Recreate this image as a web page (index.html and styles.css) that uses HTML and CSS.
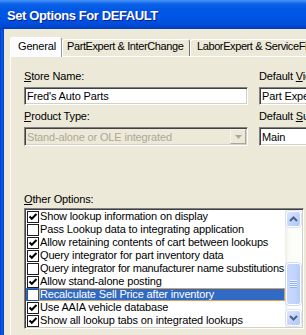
FILE: index.html
```html
<!DOCTYPE html>
<html>
<head>
<meta charset="utf-8">
<link rel="stylesheet" href="styles.css">
</head>
<body>
<div class="window">
  <div class="titlebar">Set Options For DEFAULT</div>
  <div class="frame">
    <div class="frame-left"></div>
    <div class="client">
      <div class="tabs">
        <div class="tab active">General</div>
        <div class="tab tab-part">PartExpert &amp; InterChange</div>
        <div class="tab tab-labor">LaborExpert &amp; ServiceFinder</div>
      </div>
      <div class="panel">
        <div class="fields">
          <div class="col col-left">
            <div class="lbl"><u>S</u>tore Name:</div>
            <div class="input">Fred's Auto Parts</div>
            <div class="lbl lbl-next"><u>P</u>roduct Type:</div>
            <div class="combo">
              <span class="combo-text">Stand-alone or OLE integrated</span>
              <span class="drop"><svg width="7" height="4" viewBox="0 0 7 4"><path d="M0 0H7L3.5 4Z" fill="#ACA899"/></svg></span>
            </div>
          </div>
          <div class="col col-right">
            <div class="lbl">Default <u>V</u>iew:</div>
            <div class="input">Part Expert</div>
            <div class="lbl lbl-next">Default <u>S</u>upplier:</div>
            <div class="input input-tall">Main</div>
          </div>
        </div>
        <div class="lbl other"><u>O</u>ther Options:</div>
        <div class="listbox">
          <ul class="items">
            <li class="item"><span class="cb on"><svg viewBox="0 0 10 10"><polyline points="1.5,4.5 3.8,6.8 8.5,2" fill="none" stroke="#000" stroke-width="2"/></svg></span><span class="txt">Show lookup information on display</span></li>
            <li class="item"><span class="cb"></span><span class="txt">Pass Lookup data to integrating application</span></li>
            <li class="item"><span class="cb on"><svg viewBox="0 0 10 10"><polyline points="1.5,4.5 3.8,6.8 8.5,2" fill="none" stroke="#000" stroke-width="2"/></svg></span><span class="txt">Allow retaining contents of cart between lookups</span></li>
            <li class="item"><span class="cb on"><svg viewBox="0 0 10 10"><polyline points="1.5,4.5 3.8,6.8 8.5,2" fill="none" stroke="#000" stroke-width="2"/></svg></span><span class="txt">Query integrator for part inventory data</span></li>
            <li class="item"><span class="cb"></span><span class="txt tight">Query integrator for manufacturer name substitutions</span></li>
            <li class="item"><span class="cb on"><svg viewBox="0 0 10 10"><polyline points="1.5,4.5 3.8,6.8 8.5,2" fill="none" stroke="#000" stroke-width="2"/></svg></span><span class="txt">Allow stand-alone posting</span></li>
            <li class="item selected"><span class="cb"></span><span class="txt">Recalculate Sell Price after inventory</span></li>
            <li class="item"><span class="cb on"><svg viewBox="0 0 10 10"><polyline points="1.5,4.5 3.8,6.8 8.5,2" fill="none" stroke="#000" stroke-width="2"/></svg></span><span class="txt">Use AAIA vehicle database</span></li>
            <li class="item"><span class="cb on"><svg viewBox="0 0 10 10"><polyline points="1.5,4.5 3.8,6.8 8.5,2" fill="none" stroke="#000" stroke-width="2"/></svg></span><span class="txt">Show all lookup tabs on integrated lookups</span></li>
          </ul>
          <div class="scrollbar">
            <div class="sb-btn sb-up"><svg width="9" height="6" viewBox="0 0 9 6"><polyline points="1,5 4.5,1.5 8,5" fill="none" stroke="#4D6185" stroke-width="2"/></svg></div>
            <div class="sb-track"><div class="sb-thumb"><span class="grip"></span></div></div>
            <div class="sb-btn sb-down"><svg width="9" height="6" viewBox="0 0 9 6"><polyline points="1,1 4.5,4.5 8,1" fill="none" stroke="#4D6185" stroke-width="2"/></svg></div>
          </div>
        </div>
      </div>
    </div>
  </div>
</div>
</body>
</html>
```

FILE: styles.css
```css
html, body {
  margin: 0;
  padding: 0;
}
body {
  width: 306px;
  height: 335px;
  overflow: hidden;
  background: #ECE9D8;
  font-family: "Liberation Sans", Arial, sans-serif;
  font-size: 11px;
  letter-spacing: -0.15px;
  color: #000;
}
.window {
  width: 306px;
  height: 335px;
  display: flex;
  flex-direction: column;
  overflow: hidden;
}
.titlebar {
  height: 29px;
  flex: none;
  box-sizing: border-box;
  padding: 3px 0 0 7px;
  line-height: 26px;
  font-size: 13px;
  font-weight: bold;
  letter-spacing: -0.4px;
  color: #fff;
  white-space: nowrap;
  text-shadow: 1px 1px 0 #0A1E8C;
  background: linear-gradient(to bottom, #4A96F8 0px, #2A7BF2 2px, #0C62E8 4px, #0058E6 9px, #0054E3 18px, #004DDA 24px, #0044CC 27px, #003CBA 29px);
}
.frame {
  flex: 1;
  display: flex;
  min-height: 0;
}
.frame-left {
  width: 4px;
  flex: none;
  background: linear-gradient(to right, #0031B8 0px, #0052DE 1px, #0A62F0 2px, #0049D0 3px, #0040C4 4px);
}
.client {
  flex: 1;
  min-width: 0;
  padding: 8px 0 0 6px;
  display: flex;
  flex-direction: column;
}
.tabs {
  height: 19px;
  flex: none;
  display: flex;
  align-items: flex-end;
  position: relative;
  z-index: 1;
}
.tab {
  box-sizing: border-box;
  flex: none;
  height: 17px;
  line-height: 13px;
  padding: 0 0 0 4px;
  border-top: 1px solid #fff;
  border-left: 1px solid #fff;
  border-right: 1px solid #716F64;
  border-radius: 3px 3px 0 0;
  white-space: nowrap;
  overflow: hidden;
  letter-spacing: -0.4px;
  background: #ECE9D8;
}
.tab.active {
  width: 52px;
  height: 20px;
  margin-bottom: -1px;
  padding: 2px 0 0 7px;
  letter-spacing: -0.15px;
  background: #FCFCFE;
  border-top-color: #fff;
  border-left-color: #fff;
  border-right-color: #919B9C;
}
.tab-part {
  width: 128px;
}
.tab-labor {
  width: 140px;
  padding-left: 6px;
}
.panel {
  flex: 1;
  min-height: 0;
  border-top: 1px solid #fff;
  border-left: 1px solid #fff;
  padding: 13px 0 0 13px;
}
.fields {
  display: flex;
  gap: 11px;
}
.col {
  flex: none;
  display: flex;
  flex-direction: column;
}
.col-left {
  width: 224px;
}
.col-right {
  width: 120px;
}
.lbl {
  height: 13px;
  line-height: 13px;
  white-space: nowrap;
}
.lbl-next {
  margin-top: 5px;
}
.input {
  margin-top: 4px;
  height: 18px;
  box-sizing: border-box;
  border: 1px solid;
  border-color: #808080 #fff #fff #808080;
  box-shadow: inset 1px 1px 0 #404040, inset -1px -1px 0 #D4D0C8;
  background: #fff;
  padding: 1px 0 0 2px;
  line-height: 14px;
  white-space: nowrap;
  overflow: hidden;
}
.input-tall {
  height: 19px;
  padding-top: 2px;
}
.combo {
  margin-top: 4px;
  height: 19px;
  box-sizing: border-box;
  border: 1px solid;
  border-color: #808080 #fff #fff #808080;
  box-shadow: inset 1px 1px 0 #404040, inset -1px -1px 0 #D4D0C8;
  background: #ECE9D8;
  padding: 1px 1px 1px 2px;
  display: flex;
  align-items: stretch;
}
.combo-text {
  flex: 1;
  padding-top: 1px;
  line-height: 14px;
  color: #ACA899;
  white-space: nowrap;
  overflow: hidden;
}
.drop {
  width: 16px;
  flex: none;
  box-sizing: border-box;
  border: 1px solid;
  border-color: #F4F3EE #ACA899 #ACA899 #F4F3EE;
  background: #ECE9D8;
  display: flex;
  align-items: center;
  justify-content: center;
}
.other {
  margin-top: 47px;
}
.listbox {
  margin-top: 2px;
  width: 280px;
  height: 121px;
  box-sizing: border-box;
  border: 1px solid;
  border-color: #808080 #fff #fff #808080;
  box-shadow: inset 1px 1px 0 #404040, inset -1px -1px 0 #D4D0C8;
  background: #fff;
  padding: 1px;
  display: flex;
}
.items {
  list-style: none;
  margin: 0;
  padding: 0;
  flex: 1;
  min-width: 0;
}
.item {
  height: 13px;
  display: flex;
  align-items: flex-start;
  white-space: nowrap;
}
.cb {
  width: 12px;
  height: 12px;
  flex: none;
  box-sizing: border-box;
  margin: 1px 0 0 1px;
  border: 1px solid #1C1C1C;
  background: #fff;
  display: flex;
}
.cb svg {
  width: 10px;
  height: 10px;
}
.txt {
  flex: 1;
  min-width: 0;
  margin-left: 0;
  padding-left: 1px;
  line-height: 13px;
  overflow: hidden;
}
.txt.tight {
  letter-spacing: -0.27px;
}
.item.selected {
  background: #316AC5;
}
.item.selected .cb {
  border-color: #2A4F93;
}
.item.selected .txt {
  color: #fff;
  box-shadow: inset 0 0 0 1px #D8A052;
}
.scrollbar {
  width: 17px;
  flex: none;
  display: flex;
  flex-direction: column;
  background: linear-gradient(to right, #EEEDE5, #FBFBF8 4px, #FEFEFB);
}
.sb-btn {
  height: 16px;
  flex: none;
  box-sizing: border-box;
  margin: 1px 1px 0 1px;
  border: 1px solid #fff;
  border-radius: 3px;
  background: linear-gradient(135deg, #DDE7FE, #BFD2FB 60%, #B1C7F6);
  box-shadow: 0 0 0 0.5px #B7CBF6;
  display: flex;
  align-items: center;
  justify-content: center;
}
.sb-down {
  margin: 0 1px 1px 1px;
}
.sb-track {
  flex: 1;
  padding-top: 36px;
}
.sb-thumb {
  height: 42px;
  box-sizing: border-box;
  margin: 0 1px;
  border: 1px solid #fff;
  border-radius: 3px;
  background: linear-gradient(to right, #C9D8FC, #C2D4FC 60%, #B5CAF8);
  box-shadow: 0 0 0 0.5px #A8BEF2;
  display: flex;
  align-items: center;
  justify-content: center;
}
.grip {
  width: 7px;
  height: 8px;
  background: repeating-linear-gradient(to bottom, #EEF4FE 0px, #EEF4FE 1px, #8CB0F8 1px, #8CB0F8 2px);
}
```
